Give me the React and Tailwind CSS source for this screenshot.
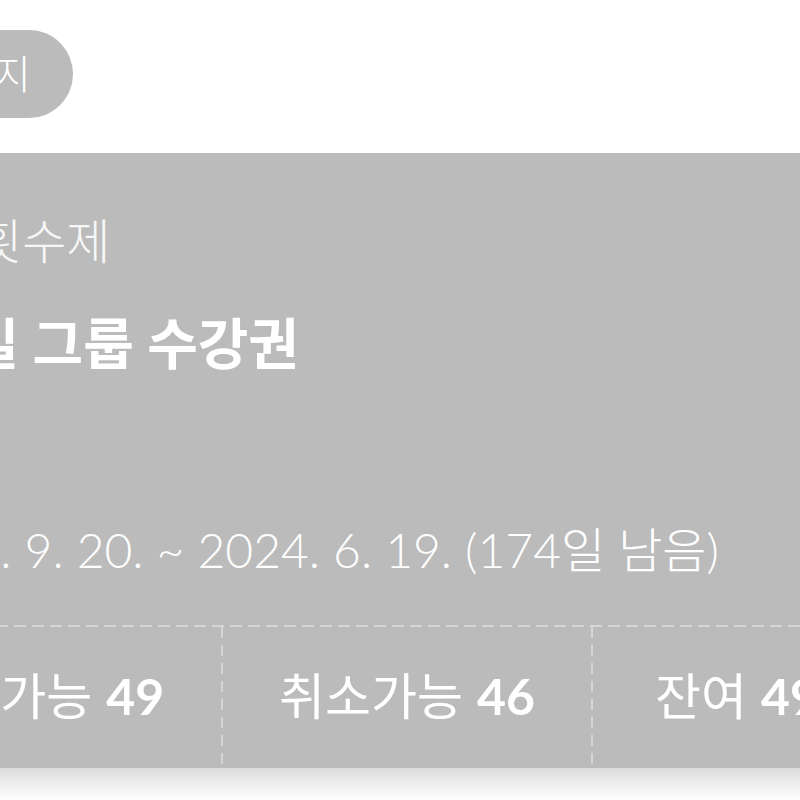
export default function App() {
  const font = { fontFamily: 'Lato, "Noto Sans CJK KR", sans-serif' };
  const vline = (
    <div className="w-[2px] shrink-0 self-stretch bg-[linear-gradient(to_bottom,#d6d6d6_11px,transparent_11px)] bg-[length:2px_18px] bg-repeat-y" />
  );
  return (
    <div className="w-[800px] h-[800px] overflow-hidden bg-white flex flex-col" style={font}>
      <div className="h-[153px] shrink-0 flex items-start">
        <div className="mt-[30px] ml-[-66px] h-[88px] pl-[60px] pr-[42px] rounded-full bg-[#bbbbbb] flex items-center text-white text-[40px] font-light leading-none">
          지
        </div>
      </div>
      <div className="h-[615px] shrink-0 bg-[#bbbbbb] flex flex-col text-white">
        <div className="pt-[63px] ml-[-22px] h-[50px] box-content text-[48px] font-light leading-[50px] text-[#f7f7f7] whitespace-nowrap">
          횟수제
        </div>
        <div className="mt-[47px] ml-[-82px] h-[60px] text-[55px] font-bold leading-[60px] whitespace-nowrap">
          평일 그룹 수강권
        </div>
        <div className="mt-[152px] ml-[-111px] h-[50px] text-[48px] font-light leading-[50px] whitespace-nowrap">
          2023. 9. 20. ~ 2024. 6. 19. (174일 남음)
        </div>
        <div className="mt-[50px] ml-[-148px] w-[1110px] h-[2px] bg-[linear-gradient(to_right,#d6d6d6_12px,transparent_12px)] bg-[length:18px_2px] bg-repeat-x" />
        <div className="ml-[-148px] w-[1110px] flex-1 flex pb-[4px]">
          <div className="flex-1 flex items-center justify-center text-[50px] leading-none whitespace-nowrap">
            <span className="font-normal">예약가능</span>
            <span className="font-bold ml-[14px]">49</span>
          </div>
          {vline}
          <div className="flex-1 flex items-center justify-center text-[50px] leading-none whitespace-nowrap">
            <span className="font-normal">취소가능</span>
            <span className="font-bold ml-[14px]">46</span>
          </div>
          {vline}
          <div className="flex-1 flex items-center justify-center text-[50px] leading-none whitespace-nowrap">
            <span className="font-normal">잔여</span>
            <span className="font-bold ml-[14px]">49/50</span>
          </div>
        </div>
      </div>
      <div className="flex-1 bg-gradient-to-b from-[#dcdcdc] to-white" />
    </div>
  );
}
